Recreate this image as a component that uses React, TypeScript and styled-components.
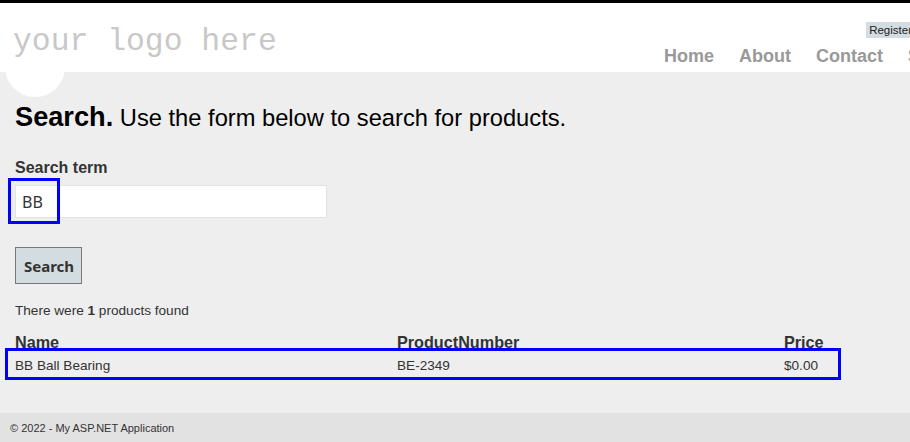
import React from "react";
import styled, { createGlobalStyle } from "styled-components";

const Global = createGlobalStyle`
  html, body { margin: 0; padding: 0; }
  body {
    background: #eeeeee;
    font-family: "Liberation Sans", Arial, sans-serif;
    color: #333;
    width: 910px;
    height: 442px;
    overflow: hidden;
  }
`;

const Page = styled.div`
  position: relative;
  height: 442px;
  display: flex;
  flex-direction: column;
`;

const Header = styled.header`
  border-top: 3px solid #000;
  background: #fff;
  height: 69px;
  display: flex;
  justify-content: space-between;
  position: relative;
  z-index: 1;
`;

const Logo = styled.div`
  font-family: "Liberation Mono", "Courier New", monospace;
  font-size: 31.4px;
  color: #c8c8c8;
  padding: 23px 0 0 13px;
  line-height: 1;
`;

const HeaderRight = styled.div`
  display: flex;
  flex-direction: column;
  align-items: flex-end;
  padding-top: 19px;
`;

const Register = styled.span`
  background: #d3dce0;
  font-size: 11.5px;
  color: #222;
  padding: 2px 0 2px 3px;
  line-height: 12px;
  margin-right: -2px;
`;

const Nav = styled.nav`
  display: flex;
  gap: 25px;
  margin-top: 8px;
  margin-right: -10px;
  white-space: nowrap;
`;

const NavLink = styled.a`
  font-size: 18px;
  font-weight: bold;
  color: #999;
  text-decoration: none;
  line-height: 20px;
`;

const Circle = styled.div`
  position: absolute;
  left: 5px;
  top: 37px;
  width: 60px;
  height: 60px;
  border-radius: 50%;
  background: #fff;
  z-index: 0;
`;

const Main = styled.main`
  flex: 1;
  padding: 30px 0 0 15px;
  position: relative;
  z-index: 1;
`;

const Title = styled.h1`
  margin: 0;
  font-size: 23.7px;
  font-weight: normal;
  color: #000;
  line-height: 30px;
  b { font-size: 27.2px; font-weight: bold; }
`;

const Label = styled.label`
  display: block;
  margin-top: 26px;
  font-size: 16px;
  font-weight: bold;
  line-height: 18px;
`;

const InputWrap = styled.div`
  position: relative;
  margin-top: 8px;
  width: 312px;
`;

const Input = styled.input`
  box-sizing: border-box;
  width: 312px;
  height: 33px;
  border: 1px solid #e2e2e2;
  background: #fff;
  font-family: "Noto Sans", sans-serif;
  font-size: 16px;
  color: #333;
  padding: 0 6px;
  outline: none;
`;

const Highlight = styled.div`
  position: absolute;
  border: 3px solid #0000ff;
  box-sizing: border-box;
  pointer-events: none;
`;

const Button = styled.button`
  margin-top: 29px;
  box-sizing: border-box;
  height: 37px;
  padding: 0 7px 0 8px;
  background: #d3dce0;
  border: 1px solid #787878;
  font-family: "Noto Sans", sans-serif;
  font-weight: bold;
  font-size: 15px;
  color: #333;
`;

const Count = styled.p`
  margin: 19px 0 0;
  font-size: 13.6px;
  line-height: 16px;
  color: #333;
`;

const Table = styled.div`
  margin-top: 14px;
  width: 830px;
  position: relative;
`;

const Row = styled.div`
  display: grid;
  grid-template-columns: 382px 387px 1fr;
`;

const HeadCell = styled.div`
  font-size: 16.2px;
  font-weight: bold;
  line-height: 18px;
  color: #333;
`;

const Cell = styled.div`
  font-size: 13.6px;
  line-height: 16px;
  padding: 7px 0 6px;
  color: #333;
`;

const Footer = styled.footer`
  background: #e2e2e2;
  height: 29px;
  font-size: 11px;
  color: #333;
  display: flex;
  align-items: center;
  padding-left: 10px;
`;

export default function App() {
  return (
    <Page>
      <Global />
      <Header>
        <Logo>your logo here</Logo>
        <HeaderRight>
          <Register>Register</Register>
          <Nav>
            <NavLink href="#">Home</NavLink>
            <NavLink href="#">About</NavLink>
            <NavLink href="#">Contact</NavLink>
            <NavLink href="#">S</NavLink>
          </Nav>
        </HeaderRight>
      </Header>
      <Circle />
      <Main>
        <Title>
          <b>Search.</b> Use the form below to search for products.
        </Title>
        <Label htmlFor="term">Search term</Label>
        <InputWrap>
          <Input id="term" defaultValue="BB" />
          <Highlight style={{ left: -7, top: -7, width: 52, height: 46 }} />
        </InputWrap>
        <Button>Search</Button>
        <Count>
          There were <b>1</b> products found
        </Count>
        <Table>
          <Row>
            <HeadCell>Name</HeadCell>
            <HeadCell>ProductNumber</HeadCell>
            <HeadCell>Price</HeadCell>
          </Row>
          <Row>
            <Cell>BB Ball Bearing</Cell>
            <Cell>BE-2349</Cell>
            <Cell>$0.00</Cell>
          </Row>
          <Highlight style={{ left: -10, top: 15, width: 836, height: 32 }} />
        </Table>
      </Main>
      <Footer>© 2022 - My ASP.NET Application</Footer>
    </Page>
  );
}
